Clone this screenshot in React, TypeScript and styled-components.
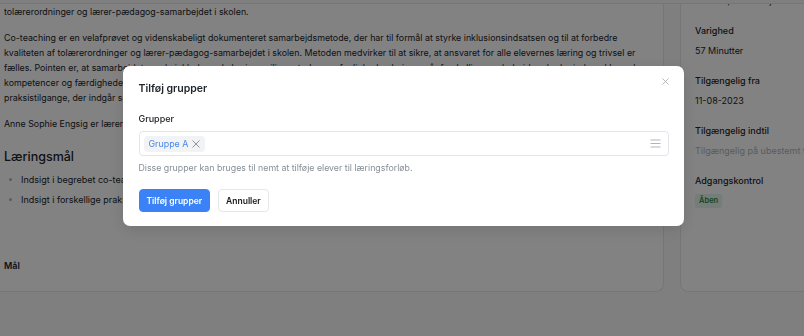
import styled, { createGlobalStyle } from 'styled-components';

const GlobalStyle = createGlobalStyle`
  html, body {
    margin: 0;
    padding: 0;
    background: #fafafa;
    font-family: Inter, "Noto Sans", sans-serif;
    color: #212529;
    overflow: hidden;
    width: 804px;
    height: 336px;
  }
  * { box-sizing: border-box; }
`;

const Page = styled.div`
  width: 804px;
  height: 336px;
  overflow: hidden;
`;

const TopRule = styled.div`
  height: 4px;
  border-bottom: 1px solid #e5e7eb;
`;

const Columns = styled.div`
  display: flex;
  gap: 16px;
  margin-left: -12px;
  align-items: flex-start;
`;

const MainCard = styled.div`
  width: 676px;
  flex-shrink: 0;
  background: #fff;
  border: 1px solid #e5e7eb;
  border-top: none;
  border-radius: 0 0 8px 8px;
  padding: 0 16px 18px 15px;
`;

const SideCard = styled.div`
  width: 200px;
  flex-shrink: 0;
  height: 288px;
  background: #fff;
  border: 1px solid #e5e7eb;
  border-top: none;
  border-radius: 0 0 8px 8px;
  padding: 0 14px;
  overflow: hidden;
`;

const Paragraph = styled.p`
  margin: 0 0 11px;
  font-size: 8.85px;
  line-height: 15px;
  white-space: nowrap;
`;

const Heading = styled.h2`
  margin: 18px 0 7px;
  font-size: 12.5px;
  line-height: 16px;
  font-weight: 500;
`;

const Goals = styled.ul`
  list-style: none;
  margin: 0;
  padding: 0;
  display: flex;
  flex-direction: column;
  gap: 4.5px;
`;

const Goal = styled.li`
  position: relative;
  padding-left: 17px;
  font-size: 9px;
  line-height: 15px;
  white-space: nowrap;

  &::before {
    content: '';
    position: absolute;
    left: 5px;
    top: 6px;
    width: 3px;
    height: 3px;
    border-radius: 50%;
    background: #adb5bd;
  }
`;

const SubHeading = styled.div`
  margin-top: 51px;
  font-size: 9px;
  line-height: 15px;
  font-weight: 600;
`;

const FieldList = styled.div`
  display: flex;
  flex-direction: column;
  gap: 15px;
  margin-top: -31px;
`;

const Field = styled.div`
  display: flex;
  flex-direction: column;
  gap: 5px;
`;

const FieldLabel = styled.div`
  font-size: 9px;
  line-height: 15px;
  font-weight: 500;
  white-space: nowrap;
`;

const FieldValue = styled.div<{ $muted?: boolean }>`
  font-size: 9px;
  line-height: 15px;
  color: ${(p) => (p.$muted ? '#adb5bd' : '#212529')};
  white-space: nowrap;
`;

const Badge = styled.span`
  align-self: flex-start;
  height: 14px;
  padding: 0 4px;
  margin-top: 0.5px;
  display: inline-flex;
  align-items: center;
  border-radius: 3px;
  background: #e3f5e9;
  color: #2f8a4c;
  font-size: 7.5px;
  font-weight: 600;
`;

const Overlay = styled.div`
  position: fixed;
  inset: 0;
  background: rgba(0, 0, 0, 0.49);
  display: flex;
  justify-content: center;
  align-items: flex-start;
  padding-top: 66px;
`;

const Modal = styled.div`
  position: relative;
  width: 561px;
  margin-left: 2px;
  background: #fff;
  border-radius: 7px;
  padding: 16px 15px 14px 16px;
  box-shadow: 0 4px 16px rgba(0, 0, 0, 0.12);
`;

const Title = styled.h3`
  margin: 0 0 16px;
  font-size: 10.5px;
  line-height: 14px;
  font-weight: 600;
`;

const CloseButton = styled.button`
  position: absolute;
  top: 10px;
  right: 13px;
  width: 10px;
  height: 10px;
  padding: 0;
  border: none;
  background: transparent;
  display: flex;
  align-items: center;
  justify-content: center;
  color: #9aa0a6;
`;

const Label = styled.label`
  display: block;
  font-size: 9px;
  line-height: 13px;
  font-weight: 500;
  margin-bottom: 6px;
`;

const MultiInput = styled.div`
  height: 25px;
  border: 1px solid #e2e5e9;
  border-radius: 4px;
  padding: 0 7px 0 4px;
  display: flex;
  align-items: center;
  justify-content: space-between;
`;

const Chip = styled.span`
  height: 16px;
  display: inline-flex;
  align-items: center;
  gap: 4px;
  padding: 0 5px 0 5px;
  border-radius: 4px;
  background: #f1f3f5;
  color: #4a86e8;
  font-size: 8.9px;
`;

const ChipRemove = styled.span`
  display: inline-flex;
  color: #868e96;
`;

const Hint = styled.div`
  margin-top: 6px;
  font-size: 8.8px;
  line-height: 12px;
  color: #868e96;
`;

const Actions = styled.div`
  display: flex;
  gap: 8px;
  margin-top: 15px;
`;

const Button = styled.button<{ $primary?: boolean }>`
  height: 23px;
  padding: 0 7px;
  border-radius: 4px;
  font-family: Inter, sans-serif;
  font-size: 8.5px;
  font-weight: 600;
  border: 1px solid ${(p) => (p.$primary ? '#3b82f6' : '#e5e7eb')};
  background: ${(p) => (p.$primary ? '#3b82f6' : '#fff')};
  color: ${(p) => (p.$primary ? '#fff' : '#1a1a1a')};
`;

function XIcon({ size, stroke }: { size: number; stroke: number }) {
  return (
    <svg width={size} height={size} viewBox="0 0 10 10" fill="none">
      <path d="M1 1L9 9M9 1L1 9" stroke="currentColor" strokeWidth={stroke} strokeLinecap="round" />
    </svg>
  );
}

export default function App() {
  return (
    <Page>
      <GlobalStyle />
      <TopRule />
      <Columns>
        <MainCard>
          <Paragraph>tolærerordninger og lærer-pædagog-samarbejdet i skolen.</Paragraph>
          <Paragraph>
            Co-teaching er en velafprøvet og videnskabeligt dokumenteret samarbejdsmetode, der har til formål at styrke inklusionsindsatsen og til at forbedre
            <br />
            kvaliteten af tolærerordninger og lærer-pædagog-samarbejdet i skolen. Metoden medvirker til at sikre, at ansvaret for alle elevernes læring og trivsel er
            <br />
            fælles. Pointen er, at samarbejdet om de inkluderende læringsmiljøer styrkes og fagligheden højnes, når forskellige medarbejdere byder ind med hver deres
            <br />
            kompetencer og færdigheder. Kurset giver indsigt i forskellige samarbejdsformer og de
            <br />
            praksistilgange, der indgår som en del af co-teaching.
          </Paragraph>
          <Paragraph>Anne Sophie Engsig er lærer, cand.pæd. og ph.d.</Paragraph>

          <Heading>Læringsmål</Heading>
          <Goals>
            <Goal>Indsigt i begrebet co-teaching</Goal>
            <Goal>Indsigt i forskellige praksistilgange</Goal>
          </Goals>

          <SubHeading>Mål</SubHeading>
        </MainCard>

        <SideCard>
          <FieldList>
            <Field>
              <FieldLabel>Emner</FieldLabel>
              <FieldValue>Metode, samarbejde</FieldValue>
            </Field>
            <Field>
              <FieldLabel>Varighed</FieldLabel>
              <FieldValue>57 Minutter</FieldValue>
            </Field>
            <Field>
              <FieldLabel>Tilgængelig fra</FieldLabel>
              <FieldValue>11-08-2023</FieldValue>
            </Field>
            <Field>
              <FieldLabel>Tilgængelig indtil</FieldLabel>
              <FieldValue $muted>Tilgængelig på ubestemt tid</FieldValue>
            </Field>
            <Field>
              <FieldLabel>Adgangskontrol</FieldLabel>
              <Badge>Åben</Badge>
            </Field>
          </FieldList>
        </SideCard>
      </Columns>

      <Overlay>
        <Modal>
          <CloseButton aria-label="Luk">
            <XIcon size={7} stroke={1} />
          </CloseButton>
          <Title>Tilføj grupper</Title>

          <Label>Grupper</Label>
          <MultiInput>
            <Chip>
              Gruppe A
              <ChipRemove>
                <XIcon size={8} stroke={1.2} />
              </ChipRemove>
            </Chip>
            <svg width="11" height="9" viewBox="0 0 11 9" fill="none">
              <path d="M0.5 1H10.5M0.5 4.5H10.5M0.5 8H10.5" stroke="#adb5bd" strokeWidth="1.2" />
            </svg>
          </MultiInput>
          <Hint>Disse grupper kan bruges til nemt at tilføje elever til læringsforløb.</Hint>

          <Actions>
            <Button $primary>Tilføj grupper</Button>
            <Button>Annuller</Button>
          </Actions>
        </Modal>
      </Overlay>
    </Page>
  );
}
